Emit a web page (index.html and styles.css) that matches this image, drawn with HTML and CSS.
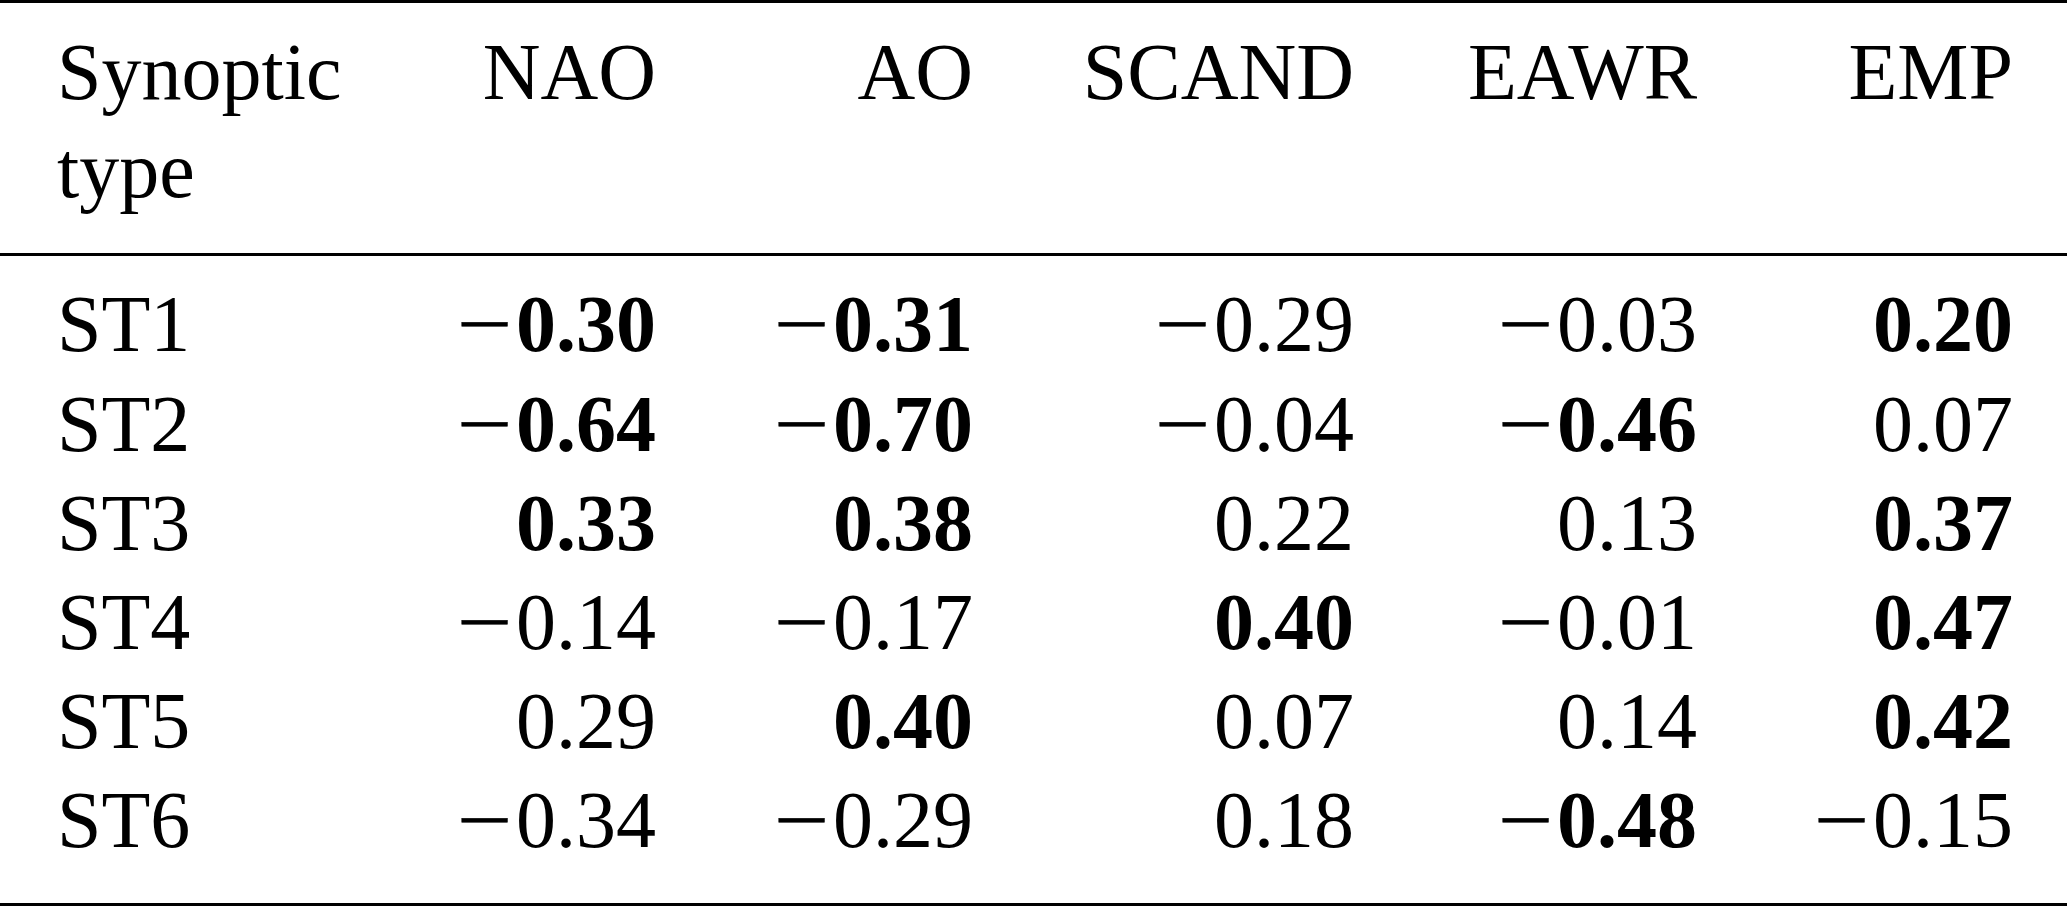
FILE: index.html
```html
<!DOCTYPE html>
<html lang="en">
<head>
<meta charset="utf-8">
<title>Synoptic types and teleconnection indices</title>
<link rel="stylesheet" href="styles.css">
</head>
<body>
<div class="tbl">
  <div class="row head">
    <div class="cell label">Synoptic<br>type</div>
    <div class="cell num">NAO</div>
    <div class="cell num">AO</div>
    <div class="cell num">SCAND</div>
    <div class="cell num">EAWR</div>
    <div class="cell num">EMP</div>
  </div>
  <div class="body">
    <div class="row">
      <div class="cell label">ST1</div>
      <div class="cell num"><span class="minus">&minus;</span><b>0.30</b></div>
      <div class="cell num"><span class="minus">&minus;</span><b>0.31</b></div>
      <div class="cell num"><span class="minus">&minus;</span>0.29</div>
      <div class="cell num"><span class="minus">&minus;</span>0.03</div>
      <div class="cell num"><b>0.20</b></div>
    </div>
    <div class="row">
      <div class="cell label">ST2</div>
      <div class="cell num"><span class="minus">&minus;</span><b>0.64</b></div>
      <div class="cell num"><span class="minus">&minus;</span><b>0.70</b></div>
      <div class="cell num"><span class="minus">&minus;</span>0.04</div>
      <div class="cell num"><span class="minus">&minus;</span><b>0.46</b></div>
      <div class="cell num">0.07</div>
    </div>
    <div class="row">
      <div class="cell label">ST3</div>
      <div class="cell num"><b>0.33</b></div>
      <div class="cell num"><b>0.38</b></div>
      <div class="cell num">0.22</div>
      <div class="cell num">0.13</div>
      <div class="cell num"><b>0.37</b></div>
    </div>
    <div class="row">
      <div class="cell label">ST4</div>
      <div class="cell num"><span class="minus">&minus;</span>0.14</div>
      <div class="cell num"><span class="minus">&minus;</span>0.17</div>
      <div class="cell num"><b>0.40</b></div>
      <div class="cell num"><span class="minus">&minus;</span>0.01</div>
      <div class="cell num"><b>0.47</b></div>
    </div>
    <div class="row">
      <div class="cell label">ST5</div>
      <div class="cell num">0.29</div>
      <div class="cell num"><b>0.40</b></div>
      <div class="cell num">0.07</div>
      <div class="cell num">0.14</div>
      <div class="cell num"><b>0.42</b></div>
    </div>
    <div class="row">
      <div class="cell label">ST6</div>
      <div class="cell num"><span class="minus">&minus;</span>0.34</div>
      <div class="cell num"><span class="minus">&minus;</span>0.29</div>
      <div class="cell num">0.18</div>
      <div class="cell num"><span class="minus">&minus;</span><b>0.48</b></div>
      <div class="cell num"><span class="minus">&minus;</span>0.15</div>
    </div>
  </div>
</div>
</body>
</html>
```
FILE: styles.css
```css
html, body {
  margin: 0;
  padding: 0;
  background: #fff;
}
body {
  font-family: "Liberation Serif", "Times New Roman", serif;
  font-size: 80px;
  color: #000;
}
.tbl {
  width: 2067px;
  border-top: 3px solid #000;
  border-bottom: 3px solid #000;
}
.row {
  display: grid;
  grid-template-columns: 400px 256px 317px 381px 343px 316px;
  padding-right: 54px;
  align-items: start;
  line-height: 99.2px;
}
.head {
  line-height: 98px;
  padding-top: 20px;
  padding-bottom: 34px;
  border-bottom: 3px solid #000;
}
.body {
  padding-top: 19.4px;
  padding-bottom: 32.4px;
}
.label {
  padding-left: 57px;
  text-align: left;
}
.num {
  text-align: right;
  white-space: nowrap;
}
.minus {
  display: inline-block;
  transform: scaleX(1.22);
  transform-origin: right center;
  margin-right: 4px;
  margin-left: 10px;
  -webkit-text-stroke: 0.6px #000;
}
b {
  font-weight: bold;
}
```
